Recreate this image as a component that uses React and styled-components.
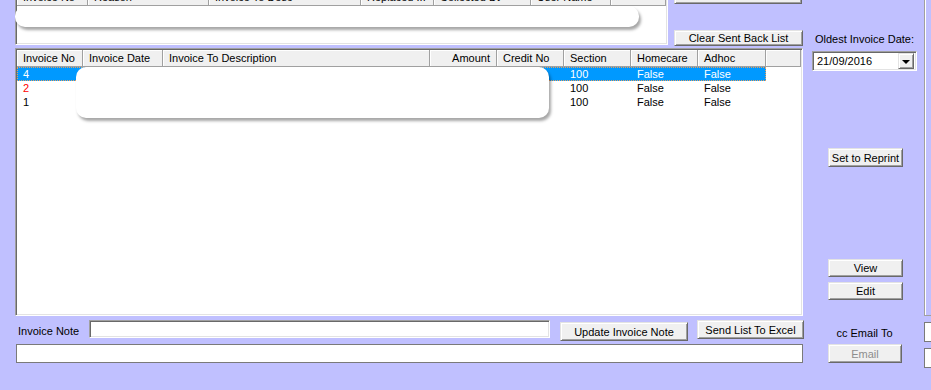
import React from 'react';
import styled, { createGlobalStyle } from 'styled-components';

const GlobalStyle = createGlobalStyle`
  html, body {
    margin: 0;
    padding: 0;
    background: #c0c0ff;
  }
  body {
    font-family: "Liberation Sans", Arial, sans-serif;
    font-size: 11px;
    color: #000;
  }
`;

const Window = styled.div`
  display: flex;
  align-items: flex-start;
  width: 931px;
  height: 390px;
  overflow: hidden;
  background: #c0c0ff;
`;

const MainColumn = styled.div`
  flex: none;
  display: flex;
  flex-direction: column;
  width: 789px;
  margin-left: 15px;
`;

const TopRow = styled.div`
  display: flex;
  align-items: flex-start;
  height: 61px;
  margin-top: -13px;
`;

const SideButtons = styled.div`
  flex: none;
  display: flex;
  flex-direction: column;
  margin-left: 6px;
`;

const ListView = styled.div`
  position: relative;
  flex: none;
  box-sizing: border-box;
  width: ${p => p.$w}px;
  height: ${p => p.$h}px;
  padding: 1px;
  background: #fff;
  border: 1px solid;
  border-color: #a0a0a0 #fff #fff #a0a0a0;
  box-shadow: inset 1px 1px #696969, inset -1px -1px #e3e3e3;
`;

const HeaderRow = styled.div`
  display: grid;
  grid-template-columns: ${p => p.$cols} 1fr;
  height: 17px;
`;

const HeaderCell = styled.div`
  box-sizing: border-box;
  padding: 0 6px;
  line-height: 16px;
  text-align: ${p => p.$align || 'left'};
  white-space: nowrap;
  overflow: hidden;
  background: #f0f0f0;
  border-right: 1px solid #a0a0a0;
  border-bottom: 1px solid #a0a0a0;
  box-shadow: inset 1px 1px #fff;
`;

const DataRow = styled.div`
  display: grid;
  grid-template-columns: ${p => p.$cols};
  width: max-content;
  height: 14px;
  line-height: 14px;
  color: ${p => (p.$selected ? '#fff' : '#000')};
  background: ${p => (p.$selected ? '#0099ff' : 'transparent')};
  outline: ${p => (p.$selected ? '1px dotted #e8a060' : 'none')};
  outline-offset: -1px;
`;

const Cell = styled.div`
  padding: 0 6px;
  white-space: nowrap;
  overflow: hidden;
  text-align: ${p => p.$align || 'left'};
  color: ${p => p.$color || 'inherit'};
`;

const Redaction = styled.div`
  position: absolute;
  left: ${p => p.$x}px;
  top: ${p => p.$y}px;
  width: ${p => p.$w}px;
  height: ${p => p.$h}px;
  background: #fff;
  border-radius: 10px;
  box-shadow: 2px 3px 3px rgba(0, 0, 0, 0.35);
`;

const Button = styled.button`
  flex: none;
  display: block;
  box-sizing: border-box;
  width: ${p => p.$w}px;
  height: ${p => p.$h || 19}px;
  margin: ${p => p.$mt || 0}px 0 0 ${p => p.$ml || 0}px;
  padding: 0;
  font-family: "Liberation Sans", Arial, sans-serif;
  font-size: 11px;
  font-weight: 400;
  white-space: nowrap;
  color: ${p => (p.disabled ? '#8d8d8d' : '#000')};
  background: #f0f0f0;
  border: 1px solid;
  border-color: #e3e3e3 #696969 #696969 #e3e3e3;
  box-shadow: inset 1px 1px #fff, inset -1px -1px #a0a0a0;
`;

const NoteRow = styled.div`
  display: flex;
  align-items: flex-start;
  height: 21px;
  margin-top: 4px;
`;

const Label = styled.div`
  flex: none;
  width: ${p => (p.$w ? `${p.$w}px` : 'auto')};
  margin: ${p => p.$mt || 0}px 0 0 ${p => p.$ml || 0}px;
  line-height: 14px;
  text-align: ${p => p.$align || 'left'};
  white-space: nowrap;
`;

const TextBox = styled.div`
  flex: none;
  box-sizing: border-box;
  width: ${p => p.$w}px;
  height: ${p => p.$h || 18}px;
  margin: ${p => p.$mt || 0}px 0 0 ${p => p.$ml || 0}px;
  background: #fff;
  border: 1px solid;
  border-color: ${p => (p.$flat ? '#7a7a7a' : '#a0a0a0 #fff #fff #a0a0a0')};
  box-shadow: ${p => (p.$flat ? 'none' : 'inset 1px 1px #696969, inset -1px -1px #e3e3e3')};
`;

const SidePanel = styled.div`
  flex: none;
  display: flex;
  flex-direction: column;
  width: 105px;
  margin-left: 8px;
`;

const Combo = styled.div`
  display: flex;
  align-items: center;
  box-sizing: border-box;
  height: 20px;
  margin-top: 5px;
  padding: 2px 2px 2px 4px;
  background: #fff;
  border: 1px solid;
  border-color: #a0a0a0 #fff #fff #a0a0a0;
  box-shadow: inset 1px 1px #696969, inset -1px -1px #e3e3e3;
`;

const ComboText = styled.span`
  flex: 1;
  line-height: 14px;
`;

const DropButton = styled.span`
  display: flex;
  align-items: center;
  justify-content: center;
  box-sizing: border-box;
  width: 16px;
  height: 16px;
  background: #f0f0f0;
  border: 1px solid;
  border-color: #e3e3e3 #696969 #696969 #e3e3e3;
  box-shadow: inset 1px 1px #fff, inset -1px -1px #a0a0a0;
`;

const Arrow = styled.span`
  width: 0;
  height: 0;
  margin-top: 1px;
  border-left: 4px solid transparent;
  border-right: 4px solid transparent;
  border-top: 4px solid #000;
`;

const EdgeStrip = styled.div`
  flex: none;
  display: flex;
  flex-direction: column;
  width: 8px;
  margin-left: 7px;
`;

const EdgeFrame = styled.div`
  height: 315px;
  border-left: 1px solid #a0a0a0;
  border-bottom: 1px solid #a0a0a0;
  box-shadow: inset 1px 0 #fff;
`;

const EdgeBox = styled.div`
  height: 18px;
  margin-top: ${p => p.$mt}px;
  background: #fff;
  border: 1px solid #7a7a7a;
  border-right: none;
`;

const topCols = [
  ['Invoice No', 71],
  ['Reason', 121],
  ['Invoice To Desc', 152],
  ['Replaced ...', 73],
  ['Collected Dt', 97],
  ['User Name', 80],
];

const invoiceCols = [
  ['Invoice No', 66],
  ['Invoice Date', 80],
  ['Invoice To Description', 267],
  ['Amount', 67, 'right'],
  ['Credit No', 67],
  ['Section', 67],
  ['Homecare', 67],
  ['Adhoc', 68],
];

const invoices = [
  { no: '4', selected: true, section: '100', homecare: 'False', adhoc: 'False' },
  { no: '2', color: '#ff0000', section: '100', homecare: 'False', adhoc: 'False' },
  { no: '1', section: '100', homecare: 'False', adhoc: 'False' },
];

const template = cols => cols.map(c => `${c[1]}px`).join(' ');

function Header({ cols }) {
  return (
    <HeaderRow $cols={template(cols)}>
      {cols.map(([title, , align]) => (
        <HeaderCell key={title} $align={align}>{title}</HeaderCell>
      ))}
      <HeaderCell />
    </HeaderRow>
  );
}

export default function App() {
  const cols = template(invoiceCols);
  return (
    <>
      <GlobalStyle />
      <Window>
        <MainColumn>
          <TopRow>
            <ListView $w={653} $h={58}>
              <Header cols={topCols} />
              <Redaction $x={-1} $y={18} $w={624} $h={21} />
            </ListView>
            <SideButtons>
              <Button $w={128} $mt={-2} disabled>Select Invoices To Print</Button>
              <Button $w={129} $h={16} $mt={26}>Clear Sent Back List</Button>
            </SideButtons>
          </TopRow>

          <ListView $w={788} $h={268}>
            <Header cols={invoiceCols} />
            {invoices.map(row => (
              <DataRow key={row.no} $cols={cols} $selected={row.selected}>
                <Cell $color={row.color}>{row.no}</Cell>
                <Cell />
                <Cell />
                <Cell $align="right" />
                <Cell />
                <Cell>{row.section}</Cell>
                <Cell>{row.homecare}</Cell>
                <Cell>{row.adhoc}</Cell>
              </DataRow>
            ))}
            <Redaction $x={60} $y={18} $w={473} $h={51} />
          </ListView>

          <NoteRow>
            <Label $w={71} $ml={3} $mt={4}>Invoice Note</Label>
            <TextBox $w={461} />
            <Button $w={128} $ml={10} $mt={2}>Update Invoice Note</Button>
            <Button $w={107} $ml={9}>Send List To Excel</Button>
          </NoteRow>
          <TextBox $w={787} $h={19} $ml={1} $mt={3} $flat />
        </MainColumn>

        <SidePanel>
          <Label $mt={32} $align="center">Oldest Invoice Date:</Label>
          <Combo>
            <ComboText>21/09/2016</ComboText>
            <DropButton><Arrow /></DropButton>
          </Combo>
          <Button $w={75} $ml={16} $mt={77}>Set to Reprint</Button>
          <Button $w={75} $h={18} $ml={16} $mt={92}>View</Button>
          <Button $w={75} $h={18} $ml={16} $mt={5}>Edit</Button>
          <Label $mt={26} $align="center">cc Email To</Label>
          <Button $w={74} $ml={16} $mt={4} disabled>Email</Button>
        </SidePanel>

        <EdgeStrip>
          <EdgeFrame />
          <EdgeBox $mt={6} />
          <EdgeBox $mt={6} />
        </EdgeStrip>
      </Window>
    </>
  );
}
